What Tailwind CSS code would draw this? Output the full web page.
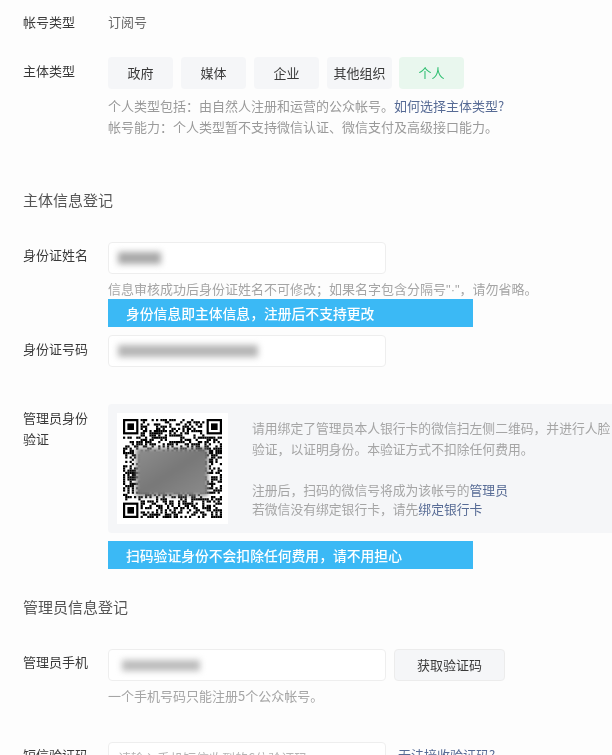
<!DOCTYPE html>
<html lang="zh-CN">
<head>
  <meta charset="UTF-8">
  <title>主体信息登记</title>
  <script src="https://cdn.jsdelivr.net/npm/@tailwindcss/browser@4"></script>
</head>
<body class="bg-[#fdfdfd] h-[755px] overflow-hidden font-['Noto_Sans_CJK_SC','Liberation_Sans',sans-serif] text-[13px] leading-5 text-[#3a3a3a]">
  <div class="blur-[0.6px] pl-[23px] pt-3 w-[612px] h-[755px] overflow-hidden">

    <div class="flex">
      <div class="w-[85px] shrink-0">帐号类型</div>
      <div class="text-[#666]">订阅号</div>
    </div>

    <div class="flex mt-[25px]">
      <div class="w-[85px] shrink-0 pt-1">主体类型</div>
      <div>
        <div class="flex">
          <div class="w-[65px] h-8 mr-[8px] flex items-center justify-center rounded bg-[#f5f6f8]">政府</div>
          <div class="w-[65px] h-8 mr-[8px] flex items-center justify-center rounded bg-[#f5f6f8]">媒体</div>
          <div class="w-[65px] h-8 mr-[8px] flex items-center justify-center rounded bg-[#f5f6f8]">企业</div>
          <div class="w-[65px] h-8 mr-[7px] flex items-center justify-center rounded bg-[#f5f6f8]">其他组织</div>
          <div class="w-[65px] h-8 flex items-center justify-center rounded bg-[#e9f7ee] text-[#2fbf71]">个人</div>
        </div>
        <div class="mt-[6px] leading-[21px] text-[#9a9a9a] whitespace-nowrap">
          个人类型包括：由自然人注册和运营的公众帐号。<span class="text-[#576b95]">如何选择主体类型?</span><br>
          帐号能力：个人类型暂不支持微信认证、微信支付及高级接口能力。
        </div>
      </div>
    </div>

    <h2 class="mt-[51px] text-[15px] leading-6 text-[#555]">主体信息登记</h2>

    <div class="flex mt-[30px]">
      <div class="w-[85px] shrink-0 pt-[3px]">身份证姓名</div>
      <div>
        <div class="w-[278px] h-8 bg-white border border-[#eeeeee] rounded-sm flex items-center pl-[9px]">
          <div class="w-[43px] h-3 bg-[#a8a8a8] blur-[3px]"></div>
        </div>
        <div class="mt-[5px] h-5 text-[#a5a5a5] whitespace-nowrap">信息审核成功后身份证姓名不可修改；如果名字包含分隔号<span class="font-['Liberation_Sans']">"·"</span>，请勿省略。</div>
        <div class="w-[365px] h-7 bg-[#3bb9f5] text-white text-[13.8px] font-medium flex items-center pl-[18px]">身份信息即主体信息，注册后不支持更改</div>
      </div>
    </div>

    <div class="flex mt-2">
      <div class="w-[85px] shrink-0 pt-1">身份证号码</div>
      <div class="w-[278px] h-8 bg-white border border-[#eeeeee] rounded-sm flex items-center pl-[9px]">
        <div class="w-[140px] h-3 bg-[#b5b5b5] blur-[3px]"></div>
      </div>
    </div>

    <div class="flex mt-[37px]">
      <div class="w-[85px] shrink-0 pt-[3px] leading-[21px]">管理员身份<br>验证</div>
      <div class="w-[520px] h-[129px] shrink-0 rounded bg-[#f5f6f8] flex pl-[9px] pt-[9px]">
        <div class="w-[111px] h-[111px] shrink-0 bg-white flex items-center justify-center relative">
          <svg id="qr" width="99" height="99" viewBox="0 0 45 45"></svg>
          <div class="absolute left-[19px] top-[35px] w-[72px] h-[48px] bg-linear-to-br from-[#8e8e8e] via-[#787878] to-[#8c8c8c] blur-[2px]"></div>
        </div>
        <div class="ml-6 pt-[4px] text-[12.8px] leading-[21px] text-[#a5a5a5] whitespace-nowrap">
          <p>请用绑定了管理员本人银行卡的微信扫左侧二维码，并进行人脸</p>
          <p>验证，以证明身份。本验证方式不扣除任何费用。</p>
          <p class="mt-[21px] leading-[19px]">注册后，扫码的微信号将成为该帐号的<span class="text-[#576b95]">管理员</span></p>
          <p class="leading-[19px]">若微信没有绑定银行卡，请先<span class="text-[#576b95]">绑定银行卡</span></p>
        </div>
      </div>
    </div>

    <div class="ml-[85px] mt-2 w-[365px] h-7 bg-[#3bb9f5] text-white text-[13.8px] font-medium flex items-center pl-[18px]">扫码验证身份不会扣除任何费用，请不用担心</div>

    <h2 class="mt-[26px] text-[15px] leading-6 text-[#555]">管理员信息登记</h2>

    <div class="flex mt-[30px]">
      <div class="w-[85px] shrink-0 pt-[3px]">管理员手机</div>
      <div>
        <div class="flex">
          <div class="w-[278px] h-8 bg-white border border-[#eeeeee] rounded-sm flex items-center pl-[13px]">
            <div class="w-[78px] h-[11px] bg-[#bcbcbc] blur-[3px]"></div>
          </div>
          <div class="ml-2 w-[111px] h-8 bg-[#f5f6f8] border border-[#ececec] rounded-sm flex items-center justify-center">获取验证码</div>
        </div>
        <div class="mt-[5px] text-[#a5a5a5]">一个手机号码只能注册5个公众帐号。</div>
      </div>
    </div>

    <div class="flex mt-9">
      <div class="w-[85px] shrink-0 pt-[3px]">短信验证码</div>
      <div class="w-[278px] h-8 bg-white border border-[#eeeeee] rounded-sm flex items-center pl-[9px] text-[#b5b5b5]">请输入手机短信收到的6位验证码</div>
      <div class="ml-3 pt-[3px] text-[#576b95]">无法接收验证码?</div>
    </div>
  </div>

  <script>
    // fake qr modules, same every run
    const qr = document.getElementById('qr');
    const size = 45;
    let seed = 73;
    const next = () => (seed = (seed * 1103515245 + 12345) & 0x7fffffff) / 0x7fffffff;
    const inFinder = (x, y) => (x < 8 && y < 8) || (x >= size - 8 && y < 8) || (x < 8 && y >= size - 8);
    let out = '';
    for (let y = 0; y < size; y++) {
      for (let x = 0; x < size; x++) {
        if (!inFinder(x, y) && next() > 0.5) out += `<rect x="${x}" y="${y}" width="1" height="1"/>`;
      }
    }
    [[0, 0], [size - 7, 0], [0, size - 7]].forEach(([x, y]) => {
      out += `<rect x="${x + 0.5}" y="${y + 0.5}" width="6" height="6" fill="none" stroke="#000"/><rect x="${x + 2}" y="${y + 2}" width="3" height="3"/>`;
    });
    qr.innerHTML = out;
  </script>
</body>
</html>
